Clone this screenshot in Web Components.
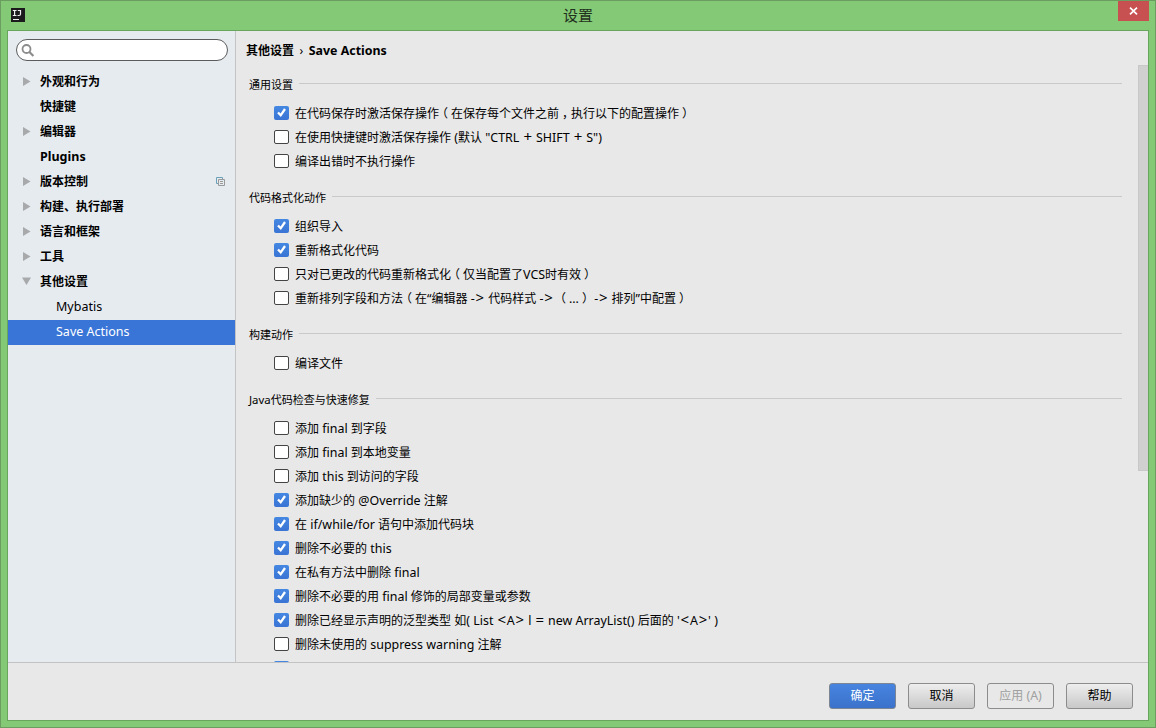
<!DOCTYPE html>
<html lang="zh-CN">
<head>
<meta charset="utf-8">
<title>设置</title>
<style>
html,body{margin:0;height:100%;overflow:hidden}
body{font:12px/16px "Noto Sans","Noto Sans CJK SC",sans-serif;color:#000}
</style>
</head>
<body>
<settings-window heading="设置">
  <settings-tree slot="side">
    <tree-item label="外观和行为" arrow="right"></tree-item>
    <tree-item label="快捷键"></tree-item>
    <tree-item label="编辑器" arrow="right"></tree-item>
    <tree-item label="Plugins"></tree-item>
    <tree-item label="版本控制" arrow="right" project></tree-item>
    <tree-item label="构建、执行部署" arrow="right"></tree-item>
    <tree-item label="语言和框架" arrow="right"></tree-item>
    <tree-item label="工具" arrow="right"></tree-item>
    <tree-item label="其他设置" arrow="down"></tree-item>
    <tree-item label="Mybatis" child></tree-item>
    <tree-item label="Save Actions" child selected></tree-item>
  </settings-tree>
  <settings-page slot="page" parent="其他设置" current="Save Actions">
    <option-group label="通用设置">
      <check-row checked label="在代码保存时激活保存操作（在保存每个文件之前，执行以下的配置操作）"></check-row>
      <check-row label='在使用快捷键时激活保存操作 (默认 "CTRL + SHIFT + S")'></check-row>
      <check-row label="编译出错时不执行操作"></check-row>
    </option-group>
    <option-group label="代码格式化动作">
      <check-row checked label="组织导入"></check-row>
      <check-row checked label="重新格式化代码"></check-row>
      <check-row label="只对已更改的代码重新格式化（仅当配置了VCS时有效）"></check-row>
      <check-row label="重新排列字段和方法（在“编辑器 -&gt; 代码样式 -&gt; （...） -&gt; 排列”中配置）"></check-row>
    </option-group>
    <option-group label="构建动作">
      <check-row label="编译文件"></check-row>
    </option-group>
    <option-group label="Java代码检查与快速修复">
      <check-row label="添加 final 到字段"></check-row>
      <check-row label="添加 final 到本地变量"></check-row>
      <check-row label="添加 this 到访问的字段"></check-row>
      <check-row checked label="添加缺少的 @Override 注解"></check-row>
      <check-row checked label="在 if/while/for 语句中添加代码块"></check-row>
      <check-row checked label="删除不必要的 this"></check-row>
      <check-row checked label="在私有方法中删除 final"></check-row>
      <check-row checked label="删除不必要的用 final 修饰的局部变量或参数"></check-row>
      <check-row checked label="删除已经显示声明的泛型类型 如( List &lt;A&gt; l = new ArrayList() 后面的 '&lt;A&gt;' )"></check-row>
      <check-row label="删除未使用的 suppress warning 注解"></check-row>
      <check-row checked label=""></check-row>
    </option-group>
  </settings-page>
  <push-button slot="actions" kind="primary" label="确定"></push-button>
  <push-button slot="actions" label="取消"></push-button>
  <push-button slot="actions" kind="disabled" label="应用 (A)"></push-button>
  <push-button slot="actions" label="帮助"></push-button>
</settings-window>

<script>
const esc = s => s.replace(/[&<>]/g, c => ({'&':'&amp;','<':'&lt;','>':'&gt;'}[c]));
// Latin runs are set slightly larger than the Chinese text around them;
// operators are wider, and full-width punctuation is centred in its cell.
const latin = t => t.split(/([+<>=])/).map(p => /^[+<>=]$/.test(p) ? `<span class="op">${esc(p)}</span>` : esc(p)).join('');
const cjk = t => t.replace(/[（），]/g, '<span class="fw">$&</span>');
const mixed = s => (s || '').split(/([\x20-\x7e“”]+)/).filter(Boolean)
  .map(t => /^[\x20-\x7e“”]/.test(t) ? `<span class="lat">${latin(t)}</span>` : cjk(t)).join('');
const textCss = '.t{white-space:pre}.lat{font-size:var(--lat,12.4px)}.op{font-size:15px;line-height:1px;padding:0 .8px}.fw{font-feature-settings:"halt";padding:0 3px}';

class Base extends HTMLElement {
  connectedCallback() {
    if (this.shadowRoot) return;
    this.attachShadow({mode: 'open'}).innerHTML = `<style>*{box-sizing:border-box}${textCss}</style>` + this.render();
  }
  a(n) { return this.getAttribute(n); }
}

customElements.define('settings-window', class extends Base {
  render() { return `<style>
    :host{display:flex;flex-direction:column;width:1156px;height:728px;box-sizing:border-box;background:#84c976;border:1px solid #6b9d60;padding:0 6px 6px}
    header{height:29px;flex:none;display:grid;grid-template-columns:46px 1fr 46px;align-items:start}
    .logo{margin:7px 0 0 4px;display:block}
    h1{margin:3px 0 0;font:15px/22px "Noto Sans","Noto Sans CJK SC",sans-serif;text-align:center;color:#1f301c}
    .close{width:31px;height:20px;background:#c75050;justify-self:end;display:flex;align-items:center;justify-content:center}
    .frame{flex:1;min-height:0;border:1px solid #69a65d;background:#e8e8e8;display:flex;flex-direction:column}
    main{height:631px;flex:none;display:grid;grid-template-columns:228px 1fr;overflow:hidden}
    footer{flex:1;border-top:1px solid #c3c3c3;display:flex;justify-content:flex-end;gap:12px;padding:20px 15px 0 0}
    </style>
    <header>
      <svg class="logo" width="14" height="14" viewBox="0 0 14 14"><rect width="14" height="14" fill="#1c1a1c"/><path d="M1.800 2.500h3.700M3.600 2.500v5M1.800 7.500h3.700M6.800 2.500h2.700v3.500q0 1.500-1.500 1.500h-1.500M2 11.500h6" fill="none" stroke="#f0f0f0" stroke-width="1.200"/></svg>
      <h1>${this.a('heading')}</h1>
      <div class="close"><svg width="9" height="8" viewBox="0 0 9 8"><path d="M1 .7l7 6.600M8 .7l-7 6.600" stroke="#fff" stroke-width="1.700"/></svg></div>
    </header>
    <div class="frame"><main><slot name="side"></slot><slot name="page"></slot></main>
    <footer><slot name="actions"></slot></footer></div>`; }
});

customElements.define('settings-tree', class extends Base {
  render() { return `<style>
    :host{display:block;background:#e6ebf0;border-right:1px solid #c4c4c6;box-sizing:border-box;padding-top:8px}
    .search{margin:0 7px 9px 8px;height:22px;border:1px solid #5c5c5c;border-radius:11px;background:#fff;padding:4px 0 0 4px}
    svg{display:block}
    </style><div class="search"><svg width="14" height="14" viewBox="0 0 14 14"><circle cx="5.500" cy="5" r="4" fill="none" stroke="#8c8c8c" stroke-width="1.800"/><path d="M8.400 8l4 4" stroke="#8c8c8c" stroke-width="2.200"/></svg></div><slot></slot>`; }
});

customElements.define('tree-item', class extends Base {
  render() {
    const shape = {right: 'M1 1v9l7.500-4.500z', down: 'M0 1.500h9l-4.500 7.500z'}[this.a('arrow')];
    return `<style>
    :host{display:flex;align-items:center;height:25px;padding:0 10px 2px 14px;font-weight:700;box-sizing:border-box;--lat:12.5px}
    :host([child]){font-weight:400;padding-left:30px;--lat:12.5px}
    :host([selected]){background:#3975d7;color:#fff}
    .arrow{width:18px;flex:none;display:flex}
    .t{flex:1}
    </style><span class="arrow">${shape ? `<svg width="10" height="11" viewBox="0 0 10 11"><path d="${shape}" fill="#a7a9ab"/></svg>` : ''}</span>
    <span class="t">${mixed(this.a('label'))}</span>
    ${this.hasAttribute('project') ? '<svg width="9" height="9" viewBox="0 0 9 9" fill="none"><path d="M2 6.500H.5v-6h6V2" stroke="#6ba0b8"/><path d="M2.500 2.500h6v6h-6zM4 4.500h3M4 6.500h3" stroke="#9a9a9a"/></svg>' : ''}`;
  }
});

customElements.define('settings-page', class extends Base {
  render() { return `<style>
    :host{display:grid;grid-template-columns:1fr 10px;height:631px;overflow:hidden}
    .body{padding:0 16px 0 12px;min-width:0}
    .crumb{display:flex;gap:5.500px;height:38px;padding-top:12px;margin-left:-2px;font-weight:700;--lat:12.4px}
    .sep{font-weight:400}
    .thumb{margin-top:34px;height:406px;background:#d0d0d0;border:1px solid #c8c8c8;border-right:0}
    </style><div class="body"><div class="crumb"><span class="t">${mixed(this.a('parent'))}</span><span class="sep">›</span><span class="t">${mixed(this.a('current'))}</span></div><slot></slot></div><div class="thumb"></div>`; }
});

customElements.define('option-group', class extends Base {
  render() { return `<style>
    :host{display:block;margin-bottom:9px;--lat:11.4px}
    .head{display:flex;align-items:center;height:32px;font-size:11px;padding-left:1px}
    .line{flex:1;height:1px;background:#c9c9c9;margin:0 0 3px 6px}
    .rows{padding-left:26px;--lat:12.45px}
    </style><div class="head"><span class="t">${mixed(this.a('label'))}</span><span class="line"></span></div><div class="rows"><slot></slot></div>`; }
});

customElements.define('check-row', class extends Base {
  render() {
    const on = this.hasAttribute('checked');
    return `<style>
    :host{display:flex;align-items:center;gap:6px;height:24px}
    .box{width:15px;height:14px;flex:none;border:1px solid #444;border-radius:2px;background:#fff;display:block}
    .on{border:0;background:linear-gradient(#4488e2,#3a74d4)}
    .t{padding-top:2px}
    svg{display:block}
    </style><span class="box ${on ? 'on' : ''}">${on ? '<svg width="15" height="14" viewBox="0 0 15 14"><path d="M4 6.500l2.700 2.800L11 3" fill="none" stroke="#fff" stroke-width="2.300"/></svg>' : ''}</span><span class="t">${mixed(this.a('label'))}</span>`;
  }
});

customElements.define('push-button', class extends Base {
  render() { return `<style>
    :host{display:block}
    button{width:67px;height:26px;padding:0 0 1px;border:1px solid #8c8c8c;border-radius:3px;background:linear-gradient(#eee,#c8c8c8);font:inherit;color:#000;display:block}
    .primary{background:linear-gradient(#4784e0,#3b72cb);color:#fff;border-color:#7c8594}
    .disabled{background:#e8e8e8;color:#a0a0a0}
    </style><button class="${this.a('kind') || ''}"><span class="t">${mixed(this.a('label'))}</span></button>`; }
});
</script>
</body>
</html>
